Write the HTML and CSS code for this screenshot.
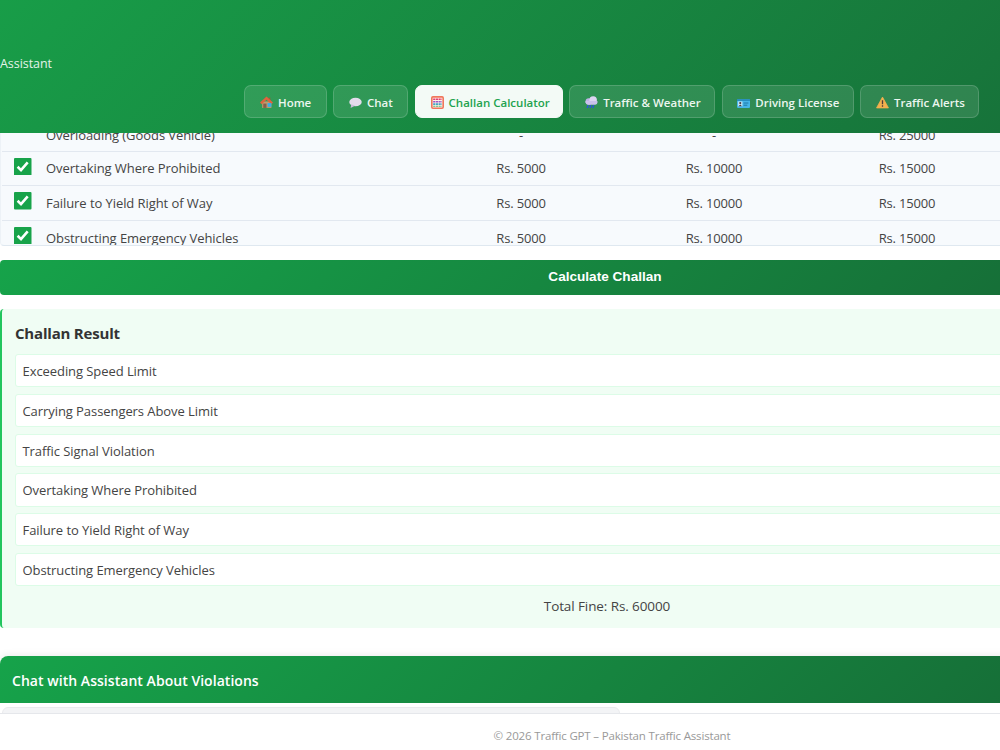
FILE: index.html
```html
<!DOCTYPE html>
<html lang="en">
<head>
    <meta charset="UTF-8">
    <meta name="viewport" content="width=device-width, initial-scale=1.0">
    <title>Traffic GPT - Challan Calculator</title>
    <link rel="stylesheet" href="styles.css">
</head>
<body>
    <header class="header">
        <p class="tagline"><span>Assistant</span></p>
        <nav class="nav">
            <a class="nav-btn home" href="#">
                <svg class="icon" viewBox="0 0 24 24"><path d="M4 10h17v12H4z" fill="#c49a6c"/><path d="M16 3h3v6h-3z" fill="#a65335"/><path d="M12 1L0 12l3 3 9-8 9 8 3-3z" fill="#e0633e"/><path d="M6 14h6v8H6z" fill="#85614a"/><path d="M14 13h7v7h-7z" fill="#39aee8"/></svg>
                <span>Home</span>
            </a>
            <a class="nav-btn chat" href="#">
                <svg class="icon" viewBox="0 0 24 24"><ellipse cx="12" cy="11" rx="11.5" ry="8" fill="#e3dcec"/><path d="M4 15l-1 7 8-4z" fill="#cbbddb"/></svg>
                <span>Chat</span>
            </a>
            <a class="nav-btn calc active" href="#">
                <svg class="icon" viewBox="0 0 24 24"><rect x="1.5" y="1.5" width="21" height="21" rx="2" fill="#fff1e8" stroke="#f0775c" stroke-width="3"/><path d="M4 6h16" stroke="#e23f70" stroke-width="3" stroke-dasharray="4 1"/><path d="M4 10.5h16" stroke="#9b55c8" stroke-width="3" stroke-dasharray="4 1"/><path d="M4 15h16" stroke="#45a6c4" stroke-width="3" stroke-dasharray="4 1"/><path d="M4 19h16" stroke="#5eb878" stroke-width="2" stroke-dasharray="4 1"/></svg>
                <span>Challan Calculator</span>
            </a>
            <a class="nav-btn weather" href="#">
                <svg class="icon" viewBox="0 0 24 24"><circle cx="7" cy="10" r="6" fill="#bfb3e6"/><circle cx="15" cy="7.5" r="7" fill="#ddd5f2"/><path d="M1 9h22v3q0 4-4 4H6q-4 0-5-4z" fill="#cbc0ec"/><path d="M6 17l-2 5M11 17l-2 5M16 17l-2 5" stroke="#2b50e0" stroke-width="2.5"/></svg>
                <span>Traffic &amp; Weather</span>
            </a>
            <a class="nav-btn license" href="#">
                <svg class="icon" viewBox="0 0 24 24"><rect y="6" width="24" height="16" rx="1.5" fill="#45b5e8"/><path d="M0 6h24v3H0z" fill="#2588ba"/><rect x="2" y="10" width="8" height="9" fill="#bfe6f5"/><circle cx="6" cy="13" r="2" fill="#4a3942"/><path d="M3 19q3-6 6 0z" fill="#4a3942"/><path d="M12 13h9M12 17h7" stroke="#176994" stroke-width="1.5"/></svg>
                <span>Driving License</span>
            </a>
            <a class="nav-btn alerts" href="#">
                <svg class="icon" viewBox="0 0 24 24"><path d="M12 2L1 22h22z" fill="#f3b04e" stroke="#f3b04e" stroke-width="1.5" stroke-linejoin="round"/><path d="M12 8v7M12 17v3" stroke="#4c3b38" stroke-width="2.4"/></svg>
                <span>Traffic Alerts</span>
            </a>
        </nav>
    </header>

    <main class="content">
        <div class="table-wrap">
            <table class="violations">
                <tr class="first">
                    <td class="check"></td>
                    <td class="name">Overloading (Goods Vehicle)</td>
                    <td class="bike">-</td>
                    <td class="car">-</td>
                    <td class="truck">Rs. 25000</td>
                    <td></td>
                </tr>
                <tr>
                    <td class="check"><svg class="tick" viewBox="0 0 17 17"><rect width="17" height="17" rx="1"/><path d="M3.5 8.5l3.3 3.3 6.5-7.5"/></svg></td>
                    <td class="name">Overtaking Where Prohibited</td>
                    <td class="bike">Rs. 5000</td>
                    <td class="car">Rs. 10000</td>
                    <td class="truck">Rs. 15000</td>
                    <td></td>
                </tr>
                <tr>
                    <td class="check"><svg class="tick" viewBox="0 0 17 17"><rect width="17" height="17" rx="1"/><path d="M3.5 8.5l3.3 3.3 6.5-7.5"/></svg></td>
                    <td class="name">Failure to Yield Right of Way</td>
                    <td class="bike">Rs. 5000</td>
                    <td class="car">Rs. 10000</td>
                    <td class="truck">Rs. 15000</td>
                    <td></td>
                </tr>
                <tr>
                    <td class="check"><svg class="tick" viewBox="0 0 17 17"><rect width="17" height="17" rx="1"/><path d="M3.5 8.5l3.3 3.3 6.5-7.5"/></svg></td>
                    <td class="name">Obstructing Emergency Vehicles</td>
                    <td class="bike">Rs. 5000</td>
                    <td class="car">Rs. 10000</td>
                    <td class="truck">Rs. 15000</td>
                    <td></td>
                </tr>
            </table>
        </div>

        <button class="calculate-btn">Calculate Challan</button>

        <section class="result">
            <h3>Challan Result</h3>
            <ul>
                <li>Exceeding Speed Limit</li>
                <li>Carrying Passengers Above Limit</li>
                <li>Traffic Signal Violation</li>
                <li>Overtaking Where Prohibited</li>
                <li>Failure to Yield Right of Way</li>
                <li>Obstructing Emergency Vehicles</li>
            </ul>
            <p class="total">Total Fine: Rs. 60000</p>
        </section>

        <section class="chat-box">
            <h3 class="chat-header">Chat with Assistant About Violations</h3>
            <div class="bubble"></div>
        </section>
    </main>

    <footer class="footer">© 2026 Traffic GPT – Pakistan Traffic Assistant</footer>
</body>
</html>
```
FILE: styles.css
```css
* {
    box-sizing: border-box;
    margin: 0;
    padding: 0;
}

body {
    display: flex;
    flex-direction: column;
    height: 750px;
    overflow: hidden;
    background: #fff;
    color: #444;
    font-family: 'Segoe UI', 'Open Sans', sans-serif;
    font-size: 13px;
}

.header {
    flex: none;
    height: 133px;
    padding-top: 54px;
    background: linear-gradient(135deg, #189d48, #17733a);
}

.tagline {
    height: 31px;
    line-height: 20px;
    font-size: 12.5px;
    letter-spacing: -0.05px;
    color: #e4f3e9;
}

.nav {
    display: flex;
    gap: 6.6px;
    padding-left: 244.3px;
}

.nav-btn {
    display: flex;
    align-items: center;
    gap: 5px;
    flex: none;
    height: 33px;
    padding-left: 14.7px;
    padding-top: 1px;
    border: 1px solid rgba(255, 255, 255, 0.16);
    border-radius: 7px;
    background: rgba(255, 255, 255, 0.11);
    color: #ecf6ef;
    font-size: 11.5px;
    font-weight: 600;
    text-decoration: none;
    white-space: nowrap;
}

.nav-btn.active {
    background: #f3faf6;
    border-color: #f3faf6;
    color: #1ea34f;
}

.home { width: 82.4px; }
.chat { width: 75px; }
.calc { width: 148px; }
.weather { width: 145.6px; }
.license { width: 132px; }
.alerts { width: 119px; }

.icon {
    width: 13px;
    height: 13px;
    flex: none;
}

.content {
    flex: none;
    width: 1210px;
    height: 580px;
    overflow: hidden;
}

.table-wrap {
    height: 113px;
    overflow: hidden;
    border-bottom: 1px solid #dfe8f0;
    border-left: 1px solid #edf2f7;
    border-radius: 0 0 4px 4px;
    background: #f7fafd;
}

.violations {
    width: 1208px;
    margin-top: -16px;
    margin-left: 1px;
    border-collapse: separate;
    border-spacing: 0;
    table-layout: fixed;
}

.violations td {
    height: 34.6px;
    border-bottom: 1px solid #e2e8f0;
    text-align: center;
    line-height: 18px;
    letter-spacing: -0.17px;
}

.violations .first td {
    padding-top: 3px;
}

.violations .check {
    width: 44px;
    padding-left: 12px;
    text-align: left;
}

.violations .name {
    width: 378px;
    text-align: left;
    letter-spacing: -0.07px;
}

.bike { width: 194px; }
.car { width: 192px; }
.truck { width: 194px; }

.tick {
    display: block;
    width: 17.5px;
    height: 17.5px;
    margin-bottom: 4px;
    fill: #18a34a;
}

.tick path {
    fill: none;
    stroke: #fff;
    stroke-width: 2.5;
}

.calculate-btn {
    display: block;
    width: 1210px;
    height: 35px;
    margin-top: 14px;
    padding-bottom: 2px;
    border: none;
    border-radius: 4px;
    background: linear-gradient(135deg, #16a34a, #166534);
    color: #fff;
    font-family: Arial, 'Liberation Sans', sans-serif;
    font-size: 13.6px;
    font-weight: bold;
}

.result {
    height: 319px;
    margin-top: 14px;
    padding: 13px;
    border-left: 2px solid #22c55e;
    border-radius: 4px;
    background: #f0fdf4;
}

.result h3 {
    height: 32px;
    line-height: 23px;
    font-size: 15px;
    letter-spacing: -0.2px;
    color: #333;
}

.result ul {
    list-style: none;
}

.result li {
    height: 33.2px;
    margin-bottom: 6.6px;
    padding-left: 6.5px;
    border: 1px solid #dcfce7;
    border-radius: 3px;
    background: #fff;
    line-height: 33px;
    letter-spacing: -0.07px;
}

.total {
    padding-left: 2px;
    line-height: 26px;
    font-size: 13.5px;
    letter-spacing: -0.1px;
    text-align: center;
}

.chat-box {
    margin-top: 28px;
    border-radius: 8px 8px 0 0;
    box-shadow: 0 0 8px rgba(0, 0, 0, 0.1);
}

.chat-header {
    height: 47px;
    padding-left: 12px;
    border-radius: 8px 8px 0 0;
    background: linear-gradient(135deg, #16a34a, #166534);
    color: #fff;
    font-size: 14px;
    font-weight: 600;
    letter-spacing: 0.04px;
    line-height: 50px;
}

.bubble {
    width: 618px;
    height: 30px;
    margin: 4px 0 0 2px;
    border: 1px solid #e9eaed;
    border-radius: 6px;
    background: #f3f4f6;
}

.footer {
    flex: none;
    width: 1224px;
    height: 37px;
    border-top: 1px solid #e5e7eb;
    background: #fff;
    color: #999;
    font-size: 11.5px;
    letter-spacing: -0.17px;
    line-height: 44px;
    text-align: center;
}
```
